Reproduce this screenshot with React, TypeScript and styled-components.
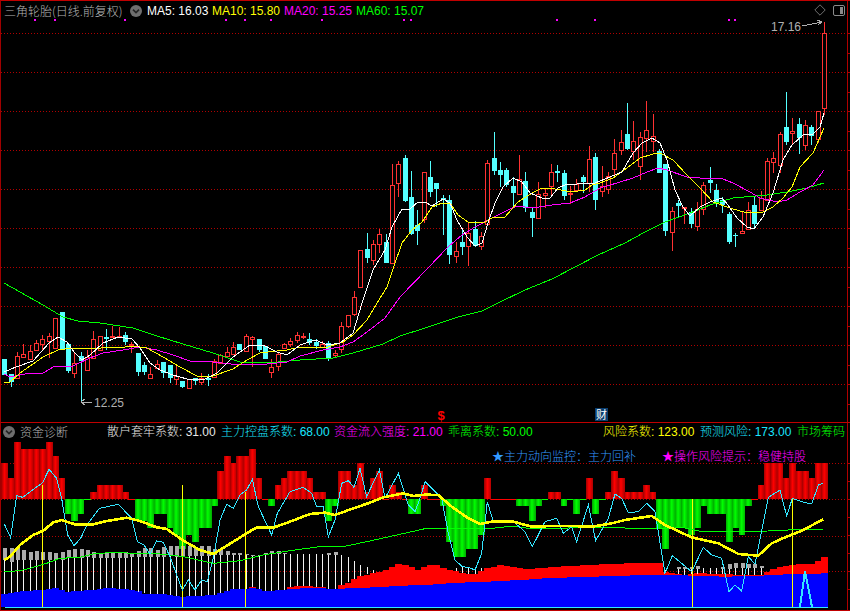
import React from "react";
import styled, { createGlobalStyle } from "styled-components";

const BAR_STEP = 6.355;
const barX = (i: number) => 4.33 + BAR_STEP * i;

const GlobalStyle = createGlobalStyle`
  html, body {
    margin: 0;
    padding: 0;
    background: #000;
  }
`;

const Page = styled.div`
  width: 850px;
  height: 611px;
  overflow: hidden;
  background: #000;
  display: flex;
  flex-direction: column;
  font-family: "Liberation Sans", "Noto Sans CJK SC", sans-serif;
  font-size: 12px;
  line-height: 18px;
`;

const MainPanel = styled.div`
  position: relative;
  height: 421px;
  border-top: 1px solid #c00000;
  border-left: 1px solid #a00000;
`;

const LowerPanel = styled.div`
  position: relative;
  height: 187px;
  border-top: 1px solid #c00000;
  border-bottom: 1px solid #c00000;
  border-left: 1px solid #a00000;
`;

const ChartSvg = styled.svg`
  display: block;
  width: 849px;
  height: 100%;
`;

const LegendRow = styled.div`
  position: absolute;
  top: 1px;
  left: 3px;
  right: 3px;
  display: flex;
  align-items: center;
  gap: 5px;
  white-space: nowrap;
`;

const LowerLegendRow = styled(LegendRow)`
  top: 0;
  left: 2px;
`;

const NoticeRow = styled.div`
  position: absolute;
  top: 24px;
  left: 491px;
  display: flex;
  gap: 26px;
  white-space: nowrap;
`;

const Title = styled.span<{ $width?: number }>`
  color: #b4b4b4;
  font-family: "Noto Sans CJK SC", sans-serif;
  font-weight: 300;
  width: ${(p) => p.$width ?? 121}px;
  flex-shrink: 0;
`;

const Reading = styled.span<{ $color: string; $width: number }>`
  color: ${(p) => p.$color};
  width: ${(p) => p.$width}px;
  flex-shrink: 0;
  font-weight: 300;
`;

const Notice = styled.span<{ $color: string }>`
  color: ${(p) => p.$color};
  font-family: "Noto Sans CJK SC", sans-serif;
  font-weight: 300;
`;

const CornerIcons = styled.div`
  position: absolute;
  top: 3px;
  right: 5px;
  display: flex;
  align-items: center;
  gap: 7px;
`;

const Chevron = () => (
  <svg width="12" height="12" viewBox="0 0 12 12" style={{ flexShrink: 0 }}>
    <circle cx="6" cy="6" r="6" fill="#6e6e6e" />
    <path d="M3 4.6 L6 7.6 L9 4.6" fill="none" stroke="#242424" strokeWidth="1.6" />
  </svg>
);

const DiamondIcon = () => (
  <svg width="12" height="12" viewBox="0 0 12 12">
    <path d="M6 .8 L11.2 6 L6 11.2 L.8 6 Z" fill="none" stroke="#6e6e6e" />
  </svg>
);

const PaneIcon = () => (
  <svg width="12" height="11" viewBox="0 0 12 11">
    <rect x=".5" y=".5" width="11" height="10" rx="1.5" fill="none" stroke="#8a8a8a" />
    <rect x="7" y="2" width="3" height="7" fill="#8a8a8a" />
  </svg>
);

// kind, body top, body bottom, high, low
type Candle = ["r" | "c", number, number, number, number];

const CANDLES: Candle[] = [
  ["c",359,375,359,375],["c",374,382,374,387],["r",356,378,352,378],["r",354,357,344,358],["r",351,359,345,359],
  ["r",343,350,340,350],["r",339,344,335,350],["r",336,341,333,358],["r",318,348,318,348],["c",312,349,312,349],
  ["c",344,371,344,373],["r",363,373,352,378],["c",356,361,352,402],["r",357,370,350,370],["r",339,358,331,358],
  ["r",336,350,336,350],["c",337,339,329,350],["r",336,337,326,337],["r",336,337,327,338],["c",335,342,332,345],
  ["r",344,345,342,353],["c",353,372,353,376],["c",365,372,362,375],["r",374,378,367,379],["r",364,368,360,368],
  ["c",362,373,362,378],["c",365,378,365,383],["r",376,379,366,385],["c",381,387,381,388],["r",379,388,379,388],
  ["c",378,381,378,385],["r",378,382,373,385],["c",378,380,374,386],["r",361,377,359,377],["r",355,363,354,363],
  ["r",352,356,347,356],["r",347,354,342,354],["c",344,350,344,350],["r",336,351,334,351],["r",337,339,336,367],
  ["c",339,350,339,352],["c",346,359,346,359],["r",367,372,359,378],["r",354,366,352,371],["r",344,348,343,348],
  ["r",341,344,338,347],["r",335,340,332,343],["r",336,337,333,339],["c",339,343,333,345],["c",342,346,339,349],
  ["r",344,347,341,348],["c",343,358,341,361],["r",353,355,350,357],["r",326,349,322,353],["r",315,326,315,328],
  ["r",297,314,291,316],["r",250,287,250,287],["c",249,258,233,263],["r",244,260,240,265],["r",234,244,229,253],
  ["c",242,263,234,263],["r",185,263,164,263],["r",164,183,161,197],["c",158,201,155,202],["c",197,234,171,235],
  ["c",225,231,210,245],["r",172,219,172,223],["c",177,192,161,197],["c",183,189,183,207],["c",198,200,195,235],
  ["c",200,255,195,264],["r",251,256,242,263],["c",242,247,230,255],["r",233,246,222,266],["c",229,246,221,247],
  ["r",236,246,232,250],["r",163,224,160,224],["c",158,171,132,175],["c",170,175,162,187],["c",170,185,168,187],
  ["c",186,193,177,208],["r",179,194,155,194],["c",181,208,172,212],["c",212,218,207,237],["r",194,218,182,218],
  ["r",193,195,188,208],["r",172,186,164,195],["c",171,173,165,182],["c",173,196,170,200],["r",193,194,186,204],
  ["r",184,190,179,190],["c",177,182,175,193],["r",159,183,146,192],["c",157,200,153,210],["r",186,191,166,197],
  ["r",176,189,172,194],["r",153,169,139,175],["r",142,150,130,155],["c",134,149,103,150],["r",141,151,121,160],
  ["r",137,166,132,180],["r",130,138,101,152],["r",136,141,114,152],["c",151,173,149,173],["c",164,231,164,236],
  ["r",211,232,207,251],["c",203,206,200,217],["r",207,208,207,224],["c",212,224,208,228],["r",209,226,202,231],
  ["r",185,209,182,215],["c",180,183,167,193],["c",190,202,184,207],["c",200,205,197,213],["c",214,242,212,244],
  ["c",235,236,233,247],["r",231,233,212,234],["r",210,229,202,229],["c",205,224,197,227],["r",198,210,191,210],
  ["r",161,200,158,200],["r",158,162,152,173],["r",134,165,132,173],["c",127,142,92,145],["r",131,133,118,145],
  ["c",124,138,118,154],["r",125,145,120,150],["c",127,136,125,145],["r",111,139,111,143],["r",33,108,22,115],
];

const MA5 = "4,372 16,367 33,361 49,343 58,337 67,342 74,352 82,360 90,355 103,343 118,337 132,339 140,348 150,363 160,370 173,375 187,379 203,380 217,373 233,357 250,345 263,345 277,352 287,355 300,345 315,340 328,345 340,343 353,333 362,303 373,270 385,250 392,227 402,209 410,209 418,202 425,202 432,206 443,199 450,203 457,220 467,237 475,246 482,243 488,223 495,203 503,187 513,178 522,182 530,193 542,198 550,198 558,188 567,184 577,184 585,183 595,183 610,177 622,172 633,153 642,143 652,138 660,143 667,160 675,190 683,207 690,216 700,207 710,202 722,198 728,205 737,218 747,227 754,229 763,217 773,193 783,160 792,145 803,135 813,134 820,127 824,113";
const MA10 = "4,382 10,382 20,373 33,364 43,357 58,350 73,348 93,349 110,347 118,348 133,346 147,348 163,357 180,367 197,376 213,376 233,369 247,360 260,353 277,351 287,350 300,347 328,347 343,342 353,335 367,320 377,303 387,287 393,269 402,243 412,230 422,222 432,207 442,203 450,203 458,215 468,222 485,222 492,218 505,217 518,202 532,193 542,188 555,189 572,192 585,190 592,185 600,183 613,178 627,168 640,158 653,154 660,153 673,160 687,175 700,188 713,202 730,208 747,213 763,212 773,207 783,198 792,187 800,167 813,153 824,128";
const MA20 = "4,374 10,377 30,373 43,373 55,366 73,366 90,358 103,353 123,350 140,347 157,350 173,355 190,361 213,362 240,365 267,364 287,362 300,356 323,350 340,347 353,342 367,332 385,318 400,297 428,268 448,247 462,235 475,227 492,218 512,208 517,206 532,208 552,205 570,203 585,197 600,188 617,183 633,178 647,172 658,168 667,170 687,177 700,178 723,179 733,183 750,192 760,198 777,202 787,200 800,192 813,185 824,170";
const MA60 = "4,283 20,292 43,305 63,317 78,321 100,323 133,328 157,336 183,344 213,353 240,362 267,363 300,360 333,358 353,353 383,344 400,336 425,328 458,317 482,311 498,303 525,290 552,279 575,267 598,255 625,243 645,232 665,222 690,213 710,205 733,198 767,195 787,192 807,188 824,183";

const SIGNAL_DOTS = [35, 55, 125, 226, 245, 271, 322, 404, 411, 557, 595, 729, 735];

// levels of the red and green histogram, one step is about 7.17px
const LEVELS = [
  5,3,8,7,7,7,7,8,6,3,-2,-3,-2,0,1,2,2,2,2,1,0,-3,-3,-4,-2,-2,-4,-5,-7,-5,-6,-4,-4,-1,4,6,5,6,6,7,3,0,-1,2,3,4,4,4,3,1,1,-3,-1,4,4,2,5,1,3,4,0,2,1,0,-2,-2,2,
  0,0,-1,-6,-8,-8,-7,-7,-5,3,0,0,0,0,-1,-1,-3,-1,0,1,1,-1,0,-2,0,3,-2,0,1,4,3,1,1,1,2,1,-4,-7,-4,-4,-4,-5,-4,-1,-2,-2,-2,-6,-4,-5,-1,0,2,5,5,5,3,5,4,4,3,5,5,
];
const GREEN_FLAT = [13, 85, 89, 91, 94];

// head top, head bottom of the grey sticks, by bar index; no bottom means a bare white stick
const STICKS: Record<number, [number, number?]> = {
  0:[548,560],1:[548,562],2:[548,560],3:[550,560],4:[552,560],5:[551,560],6:[552,560],7:[552,560],8:[553,560],9:[552,560],
  10:[550,558],11:[549,558],12:[549,558],13:[550,557],14:[552,558],15:[553,558],16:[553,558],17:[552,558],18:[553,558],19:[552,558],
  20:[553,557],21:[551,557],22:[548,557],23:[548,557],24:[550,557],25:[547,557],26:[546,556],27:[546,557],28:[546,557],29:[546,556],
  30:[548,556],31:[546,556],32:[546,556],33:[549,555],34:[550,555],35:[551,555],36:[553,555],37:[553,555],38:[554,555],39:[555,556],
  40:[555,556],41:[553,555],42:[551,554],43:[551,554],44:[553,554],45:[554],46:[554],47:[554],48:[554],49:[554],50:[554],
  51:[553,555],52:[552,555],53:[555],54:[557],55:[561],56:[565],57:[567],58:[570],
  70:[570],71:[568],72:[567],73:[567],74:[568],75:[568],104:[570],
  106:[567,569],107:[567,569],108:[567,569],109:[566,569],110:[568],111:[568],112:[568],113:[567,569],114:[564,569],115:[563,568],
  116:[563,568],117:[564,568],118:[564,568],119:[566,568],
};

type Pair = [number, number];

const fromCropLeft = (flat: number[]): Pair[] => {
  const out: Pair[] = [];
  for (let i = 0; i < flat.length; i += 2) out.push([flat[i] / 3, 410 + flat[i + 1] / 3]);
  return out;
};

const fromCropRight = (flat: number[]): Pair[] => {
  const out: Pair[] = [];
  for (let i = 0; i < flat.length; i += 2) out.push([425 + flat[i] / 3, 410 + flat[i + 1] / 3]);
  return out;
};

const toPoints = (pairs: Pair[]) => pairs.map((p) => p.join(",")).join(" ");

const interp = (pairs: Pair[], x: number) => {
  for (let i = 1; i < pairs.length; i++) {
    if (x <= pairs[i][0]) {
      const [x0, y0] = pairs[i - 1];
      const [x1, y1] = pairs[i];
      return y0 + ((y1 - y0) * (x - x0)) / (x1 - x0 || 1);
    }
  }
  return pairs[pairs.length - 1][1];
};

const BLUE_AREA = [
  ...fromCropLeft([0,552,40,548,80,543,120,540,165,534,200,545,270,540,330,534,400,540,440,553,500,553,550,560,640,555,700,538,760,535,800,543,860,538,920,533,1000,537,1100,533,1200,527]),
  ...fromCropRight([0,525,70,520,180,515,280,510,400,503,500,500,600,497,700,494,800,497,900,500,1000,497,1100,492,1208,490]),
];

const RED_AREA = [
  ...fromCropLeft([0,600,740,600,750,532,770,532,790,600,860,600,865,533,900,528,940,530,975,533,1000,600,1012,600,1014,527,1050,515,1080,497,1120,490,1170,475,1190,462,1220,465,1250,480]),
  ...fromCropRight([0,468,30,465,70,478,120,492,160,490,180,475,230,465,300,478,400,470,500,465,600,460,700,457,720,485,780,495,820,490,900,492,1000,497,1020,490,1060,470,1100,465,1170,460,1190,441,1208,441]),
];

const THIN_CYAN = [
  ...fromCropLeft([13,342,32,383,50,257,68,262,100,238,128,218,147,178,170,205,185,265,203,375,222,407,242,385,262,343,298,295,355,283,395,325,412,395,432,405,450,432,470,393,490,397,510,440,547,540,565,510,585,540,605,510,622,515,642,435,660,330,680,283,700,295,720,255,740,240,757,208,775,290,815,375,832,310,870,245,910,232,935,250,950,290,970,290,985,380,1005,330,1025,220,1045,212,1062,232,1080,175,1100,260,1138,180,1155,265,1195,190,1225,285,1245,305,1262,260]),
  ...fromCropRight([0,215,20,235,50,265,70,370,90,450,112,470,130,472,150,480,170,430,187,275,205,335,265,335,300,365,322,410,360,335,395,325,415,370,440,350,455,395,490,285,512,392,550,325,570,252,590,265,610,308,640,305,665,280,690,305,720,490,742,437,800,485,835,412,860,435,890,445,912,545,930,525,950,543,970,440,990,462,1030,262,1065,240,1085,318,1102,265,1130,275,1160,282,1180,225,1195,220]),
];

const THICK_YELLOW = [
  ...fromCropLeft([13,450,30,440,60,405,100,375,130,362,160,337,185,330,225,343,280,343,320,333,380,323,420,333,470,352,500,357,550,392,600,420,640,432,700,395,740,370,770,352,820,353,870,335,930,312,975,308,1005,315,1060,295,1110,278,1150,262,1210,250,1240,258]),
  ...fromCropRight([0,254,40,255,80,290,130,325,165,342,200,335,265,335,320,350,380,348,440,348,500,350,560,340,600,330,680,318,720,345,800,382,880,400,940,432,1000,437,1040,400,1080,382,1130,362,1195,328]),
];

const THIN_GREEN = [
  ...fromCropLeft([13,485,60,482,100,472,140,460,180,445,240,442,280,432,340,427,400,430,480,432,550,440,640,460,720,452,790,435,870,422,960,410,1030,410,1100,395,1200,373]),
  ...fromCropRight([0,356,200,355,265,348,320,357,500,352,700,356,740,355,770,352,830,365,1030,363,1090,360,1195,357]),
];

const MARKER_LINES: [number, number][] = [[42, 485], [182, 485], [245, 492], [692, 499], [792, 499]];

const AXIS_X = 847;
const GRID_DASH = "1 2";
const range = (n: number) => Array.from({ length: n }, (_, i) => i);

const CandleMark = ({ candle, index }: { candle: Candle; index: number }) => {
  const [kind, top, bottom, high, low] = candle;
  const x = Math.round(barX(index));
  const color = kind === "r" ? "#ff3232" : "#54ffff";
  return (
    <g>
      <line x1={x + 0.5} x2={x + 0.5} y1={high} y2={low} stroke={color} />
      {kind === "r" ? (
        <rect x={x - 1.5} y={top + 0.5} width={4} height={Math.max(bottom - top, 1)} fill="#000" stroke={color} />
      ) : (
        <rect x={x - 2} y={top} width={5} height={Math.max(bottom - top, 1)} fill={color} />
      )}
    </g>
  );
};

const MainChart = () => (
  <ChartSvg viewBox="1 1 849 421" shapeRendering="crispEdges">
    {range(10).map((i) => (
      <line key={i} x1={1} x2={AXIS_X} y1={33.5 + i * 39} y2={33.5 + i * 39} stroke="#b00000" strokeDasharray={GRID_DASH} />
    ))}
    <line x1={AXIS_X + 0.5} x2={AXIS_X + 0.5} y1={1} y2={422} stroke="#b00000" />
    {range(20).map((i) => (
      <line key={i} x1={AXIS_X} x2={850} y1={33.5 + i * 19.5} y2={33.5 + i * 19.5} stroke="#b00000" />
    ))}
    {SIGNAL_DOTS.map((x) => (
      <rect key={x} x={x - 1} y={19} width={2} height={2} fill="#ff00ff" />
    ))}
    {CANDLES.map((candle, i) => (
      <CandleMark key={i} candle={candle} index={i} />
    ))}
    <polyline points={MA60} fill="none" stroke="#00ff00" />
    <polyline points={MA20} fill="none" stroke="#ff00ff" />
    <polyline points={MA10} fill="none" stroke="#ffff00" />
    <polyline points={MA5} fill="none" stroke="#ffffff" />

    <path d="M802 26 L822 22 M817 20 L822 22 L818 25" fill="none" stroke="#b0b0b0" />
    <text x={771} y={31} fill="#b0b0b0" fontSize={12} fontFamily="Liberation Sans">17.16</text>

    <path d="M92 402 L82 402 M85 399 L81 402 L85 405" fill="none" stroke="#b0b0b0" />
    <text x={94} y={407} fill="#b0b0b0" fontSize={12} fontFamily="Liberation Sans">12.25</text>

    <text x={437.5} y={420} fill="#ff0000" fontSize={13} fontWeight="bold" fontFamily="Liberation Sans">$</text>
    <rect x={595} y={408} width={13} height={13} fill="#0a3d6e" />
    <text x={596} y={419} fill="#ffffff" fontSize={11} fontFamily="Noto Sans CJK SC">财</text>
  </ChartSvg>
);

const LowerChart = () => (
  <ChartSvg viewBox="1 423 849 187" shapeRendering="crispEdges">
    <defs>
      <linearGradient id="redBar" x1="0" x2="1" y1="0" y2="0">
        <stop offset="0" stopColor="#a00000" />
        <stop offset="0.45" stopColor="#ff0000" />
        <stop offset="1" stopColor="#b00000" />
      </linearGradient>
      <linearGradient id="greenBar" x1="0" x2="1" y1="0" y2="0">
        <stop offset="0" stopColor="#00a800" />
        <stop offset="0.45" stopColor="#00ff00" />
        <stop offset="1" stopColor="#00b000" />
      </linearGradient>
    </defs>
    {[463, 499, 536, 571].map((y) => (
      <line key={y} x1={1} x2={AXIS_X} y1={y + 0.5} y2={y + 0.5} stroke="#b00000" strokeDasharray={GRID_DASH} />
    ))}
    <line x1={AXIS_X + 0.5} x2={AXIS_X + 0.5} y1={423} y2={610} stroke="#b00000" />
    {range(8).map((i) => (
      <line key={i} x1={AXIS_X} x2={850} y1={463.5 + i * 18} y2={463.5 + i * 18} stroke="#b00000" />
    ))}
    {LEVELS.map((level, i) => {
      const x = barX(i) - 3;
      if (level === 0) {
        const color = GREEN_FLAT.includes(i) ? "#00ff00" : "#ff0000";
        return <rect key={i} x={x} y={499} width={BAR_STEP + 0.5} height={1} fill={color} />;
      }
      const h = Math.abs(level) * 7.17;
      return (
        <rect
          key={i}
          x={x}
          y={level > 0 ? 499.3 - h : 499.3}
          width={BAR_STEP + 0.5}
          height={h}
          fill={level > 0 ? "url(#redBar)" : "url(#greenBar)"}
        />
      );
    })}
    {range(130).map((i) => {
      const x = barX(i);
      const red = interp(RED_AREA, x);
      const blue = interp(BLUE_AREA, x);
      return (
        <g key={i}>
          {red < 607 && <rect x={x - 3} y={red} width={BAR_STEP + 0.5} height={607 - red} fill="#ff0000" />}
          <rect x={x - 3} y={blue} width={BAR_STEP + 0.5} height={607 - blue} fill="#0000ff" />
        </g>
      );
    })}
    {Object.entries(STICKS).map(([key, [top, bottom]]) => {
      const x = Math.round(barX(Number(key)));
      const floor = Math.min(interp(RED_AREA, x), interp(BLUE_AREA, x));
      return (
        <g key={key}>
          <line x1={x + 0.5} x2={x + 0.5} y1={top} y2={floor} stroke="#f4f4f4" />
          {bottom !== undefined && <rect x={x - 1.5} y={top} width={4} height={bottom - top} fill="#ababab" />}
        </g>
      );
    })}
    {MARKER_LINES.map(([x, top]) => (
      <line key={x} x1={x + 0.5} x2={x + 0.5} y1={top} y2={607} stroke="#ffff00" />
    ))}
    <polyline points={toPoints(THIN_GREEN)} fill="none" stroke="#00ff00" />
    <polyline points={toPoints(THIN_CYAN)} fill="none" stroke="#33e6ff" />
    <polyline points={toPoints(THICK_YELLOW)} fill="none" stroke="#ffff00" strokeWidth={2.6} />
    <line x1={5} x2={828} y1={607} y2={607} stroke="#33e6ff" />
    <polyline points="800,607 805,571 812,607" fill="none" stroke="#33e6ff" strokeWidth={2} />
  </ChartSvg>
);

const App = () => (
  <Page>
    <GlobalStyle />
    <MainPanel>
      <MainChart />
      <LegendRow>
        <Title>三角轮胎(日线.前复权)</Title>
        <Chevron />
        <Reading $color="#ffffff" $width={60}>MA5: 16.03</Reading>
        <Reading $color="#ffff00" $width={67}>MA10: 15.80</Reading>
        <Reading $color="#ff00ff" $width={67}>MA20: 15.25</Reading>
        <Reading $color="#00ff00" $width={67}>MA60: 15.07</Reading>
      </LegendRow>
      <CornerIcons>
        <DiamondIcon />
        <PaneIcon />
      </CornerIcons>
    </MainPanel>
    <LowerPanel>
      <LowerChart />
      <LowerLegendRow>
        <Chevron />
        <Title $width={82}>资金诊断</Title>
        <Reading $color="#e8e8e8" $width={109}>散户套牢系数: 31.00</Reading>
        <Reading $color="#19e6ff" $width={108}>主力控盘系数: 68.00</Reading>
        <Reading $color="#ff00ff" $width={109}>资金流入强度: 21.00</Reading>
        <Reading $color="#00ff00" $width={150}>乖离系数: 50.00</Reading>
        <Reading $color="#ffff00" $width={92}>风险系数: 123.00</Reading>
        <Reading $color="#19e6ff" $width={92}>预测风险: 173.00</Reading>
        <Reading $color="#00ff00" $width={48}>市场筹码</Reading>
      </LowerLegendRow>
      <NoticeRow>
        <Notice $color="#3399ff">★主力动向监控：主力回补</Notice>
        <Notice $color="#ff00ff">★操作风险提示：稳健持股</Notice>
      </NoticeRow>
    </LowerPanel>
  </Page>
);

export default App;
